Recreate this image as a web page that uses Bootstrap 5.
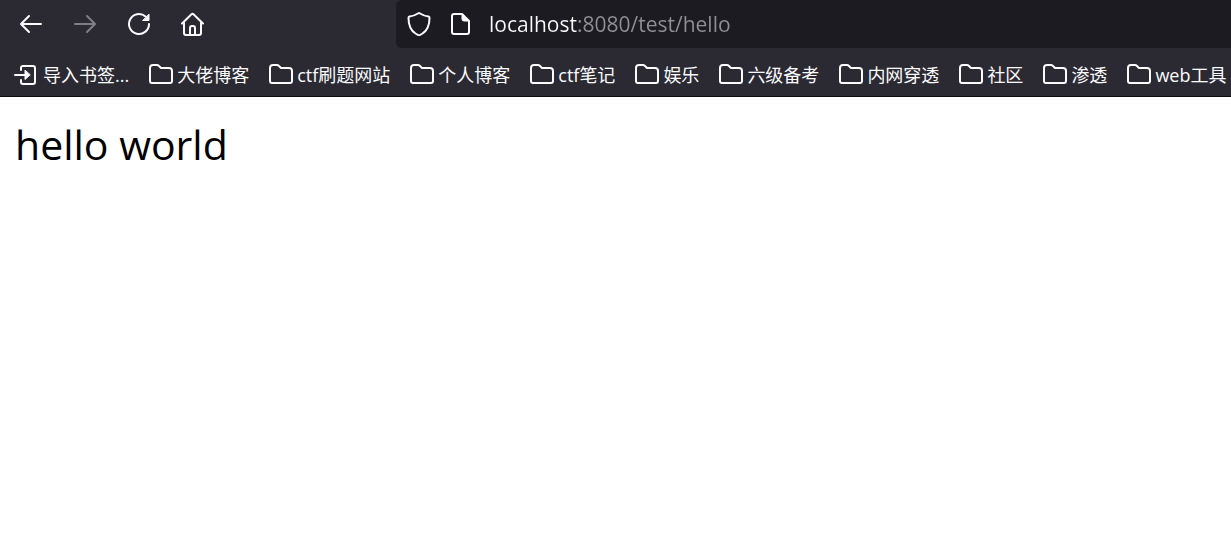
<!DOCTYPE html>
<html lang="zh-CN">
<head>
<meta charset="utf-8">
<meta name="viewport" content="width=device-width, initial-scale=1">
<title>localhost:8080/test/hello</title>
<link href="https://cdn.jsdelivr.net/npm/bootstrap@5.3.0/dist/css/bootstrap.min.css" rel="stylesheet">
<style>
  body { font-family: "Open Sans", "Noto Sans CJK SC", sans-serif; color: #000; background: #fff; }
  .browser { background: #2b2a33; border-bottom: 1px solid #0c0c0d; color: #fbfbfe; }
  .tools { width: 396px; gap: 30px; padding-left: 19px; }
  .tool { width: 24px; height: 24px; padding: 0; border: 0; background: none; color: inherit; line-height: 0; }
  .tool:disabled { opacity: .4; }
  .browser svg { display: block; fill: none; stroke: currentColor; stroke-width: 2; stroke-linecap: round; stroke-linejoin: round; flex: none; }
  .browser svg .solid { fill: currentColor; }
  .address { height: 48px; background: #1c1b22; border-radius: 6px 0 0 6px; padding-left: 11px; gap: 17px; min-width: 0; }
  .url { font-size: 21px; line-height: 32px; height: 32px; border: 0; padding: 0; outline: 0; min-width: 0; color: transparent; caret-color: #fbfbfe;
    background: linear-gradient(90deg, #fbfbfe 88px, #8f8f94 88px); -webkit-background-clip: text; background-clip: text; }
  .bookmarks { height: 48px; padding: 6px 0 0 14px; gap: 20px; font-size: 18px; line-height: 24px; }
  .bookmarks a { color: inherit; gap: 5px; flex: none; }
  .bookmarks a + a { gap: 4px; }
  .greeting { font-size: 41px; line-height: 60px; padding: 17px 15px; }
</style>
</head>
<body>
<svg class="d-none" aria-hidden="true">
  <symbol id="folder" viewBox="0 0 24 24"><path d="M1 18V5q0-3 3-3h4q1 0 2 1l2 2h8q3 0 3 3v10q0 2-2 2H3q-2 0-2-2z"/></symbol>
</svg>
<header class="browser">
  <div class="d-flex align-items-center">
    <nav class="tools d-flex align-items-center flex-shrink-0" aria-label="导航">
      <button class="tool" type="button" aria-label="后退"><svg width="24" height="24" viewBox="0 0 24 24"><path d="M22 12H3M10 4l-8 8 8 8"/></svg></button>
      <button class="tool" type="button" aria-label="前进" disabled><svg width="24" height="24" viewBox="0 0 24 24"><path d="M2 12h19M14 4l8 8-8 8"/></svg></button>
      <button class="tool" type="button" aria-label="刷新"><svg width="24" height="24" viewBox="0 0 24 24"><path d="M22 12A10 10 0 1 1 18.500 4.400"/><path class="solid" stroke-width="1" d="M22 2.500v6h-6z"/></svg></button>
      <button class="tool" type="button" aria-label="主页"><svg width="24" height="24" viewBox="0 0 24 24"><path d="M1 11.500 10.500 2.300q1-.9 2 0l9.500 9.200M3 10v11q0 2 2 2h13q2 0 2-2V10M9 23v-7q0-2 2-2h1q2 0 2 2v7"/></svg></button>
    </nav>
    <div class="address d-flex align-items-center flex-grow-1">
      <svg width="24" height="24" viewBox="0 0 24 24"><path d="M12 1q5 3 9.500 3.500 1 .2 1 1.500 0 11-7 15.500L12 23.500l-3.500-2Q1.500 17 1.500 6q0-1.300 1-1.500Q7 4 12 1z"/></svg>
      <svg width="24" height="24" viewBox="0 0 24 24"><path d="M14 2H6Q4 2 4 4v16q0 2 2 2h13q2 0 2-2V9z"/><path class="solid" stroke-width="1" d="M14 2v5q0 2 2 2h5z"/></svg>
      <input class="url flex-grow-1" type="text" aria-label="地址" value="localhost:8080/test/hello" spellcheck="false">
    </div>
  </div>
  <nav class="bookmarks d-flex align-items-center overflow-hidden text-nowrap" aria-label="书签">
    <a class="d-flex align-items-center text-decoration-none" href="#"><svg width="24" height="24" viewBox="0 0 24 24"><path d="M7 7V5q0-2 2-2h10q2 0 2 2v14q0 2-2 2H9q-2 0-2-2v-2M1 12h12"/><path class="solid" stroke-width="1" d="M11 7.500v9l5-4.500z"/></svg>导入书签...</a>
    <a class="d-flex align-items-center text-decoration-none" href="#"><svg width="24" height="24"><use href="#folder"/></svg>大佬博客</a>
    <a class="d-flex align-items-center text-decoration-none" href="#"><svg width="24" height="24"><use href="#folder"/></svg>ctf刷题网站</a>
    <a class="d-flex align-items-center text-decoration-none" href="#"><svg width="24" height="24"><use href="#folder"/></svg>个人博客</a>
    <a class="d-flex align-items-center text-decoration-none" href="#"><svg width="24" height="24"><use href="#folder"/></svg>ctf笔记</a>
    <a class="d-flex align-items-center text-decoration-none" href="#"><svg width="24" height="24"><use href="#folder"/></svg>娱乐</a>
    <a class="d-flex align-items-center text-decoration-none" href="#"><svg width="24" height="24"><use href="#folder"/></svg>六级备考</a>
    <a class="d-flex align-items-center text-decoration-none" href="#"><svg width="24" height="24"><use href="#folder"/></svg>内网穿透</a>
    <a class="d-flex align-items-center text-decoration-none" href="#"><svg width="24" height="24"><use href="#folder"/></svg>社区</a>
    <a class="d-flex align-items-center text-decoration-none" href="#"><svg width="24" height="24"><use href="#folder"/></svg>渗透</a>
    <a class="d-flex align-items-center text-decoration-none" href="#"><svg width="24" height="24"><use href="#folder"/></svg>web工具</a>
  </nav>
</header>
<main class="greeting">hello world</main>
<script src="https://cdn.jsdelivr.net/npm/bootstrap@5.3.0/dist/js/bootstrap.bundle.min.js"></script>
</body>
</html>
